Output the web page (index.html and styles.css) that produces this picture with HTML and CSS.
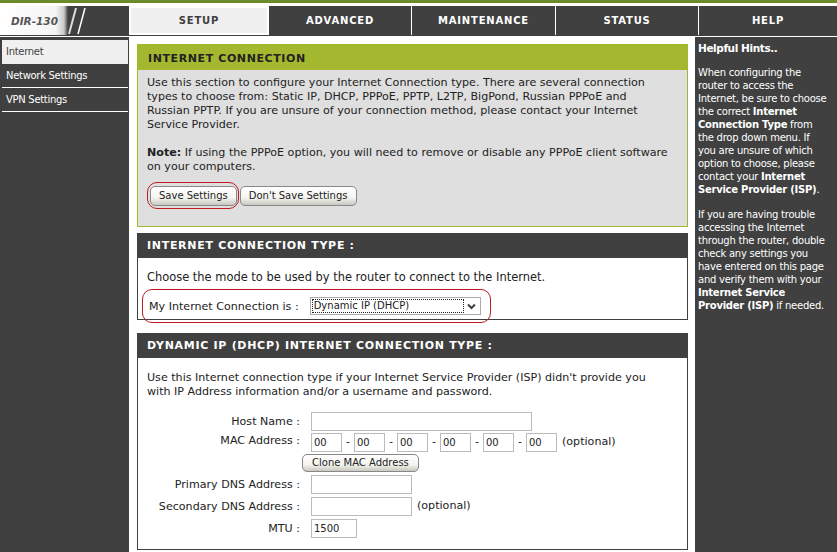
FILE: index.html
```html
<!DOCTYPE html>
<html lang="en">
<head>
  <meta charset="UTF-8" />
  <title>D-Link | Internet Connection</title>
  <link rel="stylesheet" href="styles.css">
</head>
<body>
  <div class="topbar"></div>

  <div class="nav">
    <div class="logo">
      <span class="model">DIR-130</span>
      <svg class="slashes" width="20" height="28" viewBox="0 0 20 28">
        <path d="M2 27 L9 1" stroke="#ddd" stroke-width="2" fill="none"/>
        <path d="M11 27 L18 1" stroke="#fff" stroke-width="1.5" fill="none"/>
      </svg>
    </div>
    <div class="tab active">SETUP</div>
    <div class="tab">ADVANCED</div>
    <div class="tab">MAINTENANCE</div>
    <div class="tab">STATUS</div>
    <div class="tab last">HELP</div>
  </div>

  <div class="main">
    <div class="sidebar">
      <a class="side-link current">Internet</a>
      <a class="side-link">Network Settings</a>
      <a class="side-link">VPN Settings</a>
    </div>

    <div class="content">
      <div class="panel intro">
        <h2 class="panel-head green">INTERNET CONNECTION</h2>
        <div class="panel-body">
          <p class="narrow">Use this section to configure your Internet Connection type. There are several connection types to choose from: Static IP, DHCP, PPPoE, PPTP, L2TP, BigPond, Russian PPPoE and Russian PPTP. If you are unsure of your connection method, please contact your Internet Service Provider.</p>
          <p class="note"><b>Note:</b> If using the PPPoE option, you will need to remove or disable any PPPoE client software on your computers.</p>
          <div class="actions">
            <span class="ring save-ring"><button class="btn">Save Settings</button></span>
            <button class="btn">Don't Save Settings</button>
          </div>
        </div>
      </div>

      <div class="panel type">
        <h2 class="panel-head">INTERNET CONNECTION TYPE :</h2>
        <div class="panel-body">
          <p class="choose">Choose the mode to be used by the router to connect to the Internet.</p>
          <div class="ring mode-ring">
            <span class="mode-label">My Internet Connection is :</span>
            <div class="select">
              <span class="select-value"><span class="focus-text">Dynamic IP (DHCP)</span></span>
              <span class="select-arrow">
                <svg width="9" height="7" viewBox="0 0 9 7"><path d="M1 1.5 L4.5 5 L8 1.5" stroke="#404040" stroke-width="2" fill="none"/></svg>
              </span>
            </div>
          </div>
        </div>
      </div>

      <div class="panel dhcp">
        <h2 class="panel-head">DYNAMIC IP (DHCP) INTERNET CONNECTION TYPE :</h2>
        <div class="panel-body">
          <p class="narrow">Use this Internet connection type if your Internet Service Provider (ISP) didn't provide you with IP Address information and/or a username and password.</p>
          <div class="form">
            <label>Host Name :</label>
            <div><input class="field host" type="text"></div>

            <label class="mac-label">MAC Address :</label>
            <div class="mac">
              <input class="field octet" type="text" value="00"><span>-</span>
              <input class="field octet" type="text" value="00"><span>-</span>
              <input class="field octet" type="text" value="00"><span>-</span>
              <input class="field octet" type="text" value="00"><span>-</span>
              <input class="field octet" type="text" value="00"><span>-</span>
              <input class="field octet" type="text" value="00">
              <span class="optional">(optional)</span>
            </div>

            <span></span>
            <div class="clone"><button class="btn">Clone MAC Address</button></div>

            <label>Primary DNS Address :</label>
            <div><input class="field dns" type="text"></div>

            <label>Secondary DNS Address :</label>
            <div class="inline"><input class="field dns" type="text"><span>(optional)</span></div>

            <label>MTU :</label>
            <div><input class="field mtu" type="text" value="1500"></div>
          </div>
        </div>
      </div>
    </div>

    <div class="hints">
      <h3>Helpful Hints..</h3>
      <p>When configuring the<br>router to access the<br>Internet, be sure to choose<br>the correct <b>Internet<br>Connection Type</b> from<br>the drop down menu. If<br>you are unsure of which<br>option to choose, please<br>contact your <b>Internet<br>Service Provider (ISP)</b>.</p>
      <p>If you are having trouble accessing the Internet through the router, double check any settings you have entered on this page and verify them with your <b>Internet Service Provider (ISP)</b> if needed.</p>
    </div>
  </div>
</body>
</html>
```

FILE: styles.css
```css
html, body {
  height: 552px;
  overflow: hidden;
}
body {
  margin: 0;
  background-color: #fff;
  color: #222;
  font-family: "DejaVu Sans", sans-serif;
  font-size: 11.1px;
  line-height: 14px;
}
p {
  margin: 0;
}
.topbar {
  height: 3px;
  margin-bottom: 3px;
  background-color: #6d8a2a;
}

/* top navigation */
.nav {
  display: grid;
  grid-template-columns: 129px 138px 142px 143px 142px 1fr;
  column-gap: 1px;
  height: 29px;
  background-color: #fff;
  border-bottom: 1px solid #404040;
}
.logo {
  display: flex;
  align-items: center;
  padding-left: 11px;
  background: linear-gradient(to right, #fff 0, #f4f4f4 56px, #c8c8c8 64px, #404040 68px);
  background-color: #404040;
}
.model {
  color: #555;
  font-weight: bold;
  font-style: italic;
  font-size: 10.5px;
}
.slashes {
  margin-left: 9px;
}
.tab {
  display: flex;
  align-items: center;
  justify-content: center;
  background-color: #404040;
  color: #fff;
  font-weight: bold;
  font-size: 10px;
  letter-spacing: 0.8px;
}
.tab.active {
  margin: 2px 1px;
  background-color: #f0f0f0;
  color: #404040;
}

/* three columns below the nav */
.main {
  display: grid;
  grid-template-columns: 130px 565px 1fr;
  height: 516px;
  margin-top: 1px;
}
.sidebar {
  background-color: #404040;
  border-right: 1px solid #fff;
  padding: 3px 0 0 2px;
  font-size: 10px;
  letter-spacing: -0.3px;
}
.side-link {
  display: block;
  height: 23px;
  margin-right: 1px;
  padding: 0 0 0 4px;
  line-height: 23px;
  color: #fff;
  border-bottom: 1px solid #fff;
}
.side-link.current {
  height: 24px;
  background-color: #f0f0f0;
  color: #404040;
  border-bottom: 0;
}
.content {
  display: flex;
  flex-direction: column;
  padding: 7px 7px 0;
  background-color: #fff;
}
.panel {
  box-sizing: border-box;
  border: 1px solid #404040;
}
.panel-head {
  margin: 0;
  padding-left: 9px;
  height: 24px;
  line-height: 24px;
  background-color: #404040;
  color: #fff;
  font-size: 11px;
  font-weight: bold;
  letter-spacing: 0.7px;
}
.panel-body {
  padding: 0 9px;
}
.narrow {
  max-width: 510px;
}

.intro {
  height: 183px;
  margin-bottom: 6px;
  background-color: #dfdfdf;
  border-color: #a4b82f;
}
.panel-head.green {
  height: 25px;
  line-height: 27px;
  padding-left: 10px;
  background-color: #a4b82f;
  color: #222;
  letter-spacing: 0.6px;
}
.intro .panel-body {
  padding-top: 6px;
}
.note {
  margin-top: 14px;
}
.actions {
  display: flex;
  align-items: center;
  margin-top: 8px;
}
.btn {
  height: 20px;
  padding: 0 8px;
  border: 1px solid #888;
  border-radius: 5px;
  background: linear-gradient(to bottom, #fff, #f4f4f0 60%, #c8c8c0);
  color: #222;
  font-family: inherit;
  font-size: 10px;
}
.ring {
  border: 1px solid #c01a22;
  border-radius: 10px;
}
.save-ring {
  display: flex;
  align-items: center;
  height: 25px;
  padding: 0 1px 0 2px;
  margin-right: 1px;
}

.type {
  height: 87px;
  margin-bottom: 13px;
}
.type .panel-body {
  padding-top: 12px;
}
.choose {
  font-size: 11.45px;
}
.mode-ring {
  display: flex;
  align-items: center;
  box-sizing: border-box;
  width: 349px;
  height: 34px;
  margin: 5px 0 0 -5px;
  padding-left: 6px;
  gap: 11px;
}
.mode-label {
  padding-top: 2px;
}
.select {
  display: flex;
  box-sizing: border-box;
  width: 171px;
  height: 18px;
  border: 1px solid #aaa;
  padding: 1px;
  background-color: #fff;
}
.select-value {
  flex: 1;
  font-size: 10px;
  line-height: 14px;
}
.focus-text {
  display: block;
  padding-left: 2px;
  outline: 1px dotted #222;
  outline-offset: -1px;
}
.select-arrow {
  display: flex;
  align-items: center;
  justify-content: center;
  width: 15px;
}

.dhcp {
  height: 217px;
}
.dhcp .panel-body {
  padding-top: 13px;
}
.form {
  display: grid;
  grid-template-columns: 153px 1fr;
  column-gap: 11px;
  margin-top: 11px;
  align-items: center;
}
.form label {
  padding-top: 2px;
  text-align: right;
}
.form .mac-label {
  align-self: start;
}
.form > div {
  display: flex;
  align-items: center;
  height: 22px;
}
.form > .mac {
  height: 20px;
}
.form > .clone {
  height: 21px;
  margin-left: -9px;
}
.clone .btn {
  height: 18px;
  padding: 0 9px;
}
.field {
  box-sizing: border-box;
  height: 19px;
  padding: 0 2px;
  border: 1px solid #bbb;
  color: #222;
  font-family: inherit;
  font-size: 10px;
}
.host { width: 221px; }
.dns { width: 101px; }
.mtu { width: 46px; }
.octet { width: 31px; }
.mac span {
  width: 12px;
  text-align: center;
}
.mac .optional {
  width: auto;
  margin-left: 5px;
}
.inline {
  gap: 5px;
}

/* help column */
.hints {
  padding: 4px 3px 0 3px;
  background-color: #404040;
  color: #fff;
  font-size: 10px;
  letter-spacing: -0.25px;
}
.hints h3 {
  margin: 0 0 11px;
  font-size: 10.5px;
  line-height: 14px;
  letter-spacing: -0.4px;
}
.hints p {
  margin-bottom: 12px;
  line-height: 13px;
}
```
